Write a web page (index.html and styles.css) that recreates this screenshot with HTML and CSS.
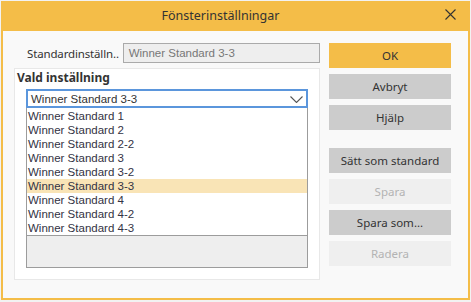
FILE: index.html
```html
<!DOCTYPE html>
<html lang="sv">
<head>
<meta charset="utf-8">
<title>Fönsterinställningar</title>
<link rel="stylesheet" href="styles.css">
</head>
<body>
<div class="window">
  <div class="titlebar">
    <div class="title">Fönsterinställningar</div>
    <button class="close" aria-label="Stäng">
      <svg width="11" height="11" viewBox="0 0 11 11"><path d="M0.5 0.5 L10.5 10.5 M10.5 0.5 L0.5 10.5" stroke="#333" stroke-width="1.1" fill="none"/></svg>
    </button>
  </div>
  <div class="content">
    <div class="left">
      <div class="field-row">
        <span class="field-label">Standardinställn..</span>
        <div class="textbox">Winner Standard 3-3</div>
      </div>
      <div class="group">
        <div class="group-title">Vald inställning</div>
        <div class="combo">
          <span>Winner Standard 3-3</span>
          <svg class="chev" width="13" height="7" viewBox="0 0 13 7"><path d="M0.5 0.5 L6.5 6.5 L12.5 0.5" stroke="#555" stroke-width="1.1" fill="none"/></svg>
        </div>
        <div class="listwrap">
          <ul class="list">
            <li>Winner Standard 1</li>
            <li>Winner Standard 2</li>
            <li>Winner Standard 2-2</li>
            <li>Winner Standard 3</li>
            <li>Winner Standard 3-2</li>
            <li class="selected">Winner Standard 3-3</li>
            <li>Winner Standard 4</li>
            <li>Winner Standard 4-2</li>
            <li>Winner Standard 4-3</li>
          </ul>
          <div class="list-empty"></div>
        </div>
      </div>
    </div>
    <div class="right">
      <div class="btn-group">
        <button class="btn primary">OK</button>
        <button class="btn">Avbryt</button>
        <button class="btn">Hjälp</button>
      </div>
      <div class="btn-group second">
        <button class="btn">Sätt som standard</button>
        <button class="btn disabled">Spara</button>
        <button class="btn">Spara som...</button>
        <button class="btn disabled">Radera</button>
      </div>
    </div>
  </div>
</div>
</body>
</html>
```
FILE: styles.css
```css
html, body {
  margin: 0;
  padding: 0;
}
body {
  background: #f2f2f2;
  width: 471px;
  height: 302px;
  overflow: hidden;
  font-family: "Noto Sans", "Open Sans", sans-serif;
  color: #333;
}
.window {
  margin: 1px 0 0 1px;
  width: 469px;
  height: 299px;
  box-sizing: border-box;
  border: 2px solid #f4bd48;
  border-top: 0;
  background: #f9f9f9;
  display: flex;
  flex-direction: column;
}
.titlebar {
  height: 30px;
  background: #f4bd48;
  position: relative;
  display: flex;
  align-items: center;
  justify-content: center;
  padding-right: 30px;
}
.title {
  font-size: 12.5px;
  color: #333;
  margin-top: -1px;
}
.close {
  position: absolute;
  right: 12px;
  top: 8px;
  width: 11px;
  height: 11px;
  padding: 0;
  border: 0;
  background: none;
  display: block;
}
.close svg { display: block; }
.content {
  flex: 1;
  display: flex;
  padding: 12px 0 0 11px;
}
.left {
  width: 306px;
  display: flex;
  flex-direction: column;
}
.field-row {
  display: flex;
  align-items: center;
  height: 20px;
}
.field-label {
  font-size: 11.5px;
  width: 96px;
  padding-left: 13px;
  letter-spacing: -0.15px;
  white-space: nowrap;
  overflow: hidden;
  color: #333;
}
.textbox {
  width: 198px;
  height: 20px;
  box-sizing: border-box;
  border: 1px solid #aaa;
  background: #eeeeee;
  color: #777;
  font-family: "Liberation Sans", Arial, sans-serif;
  font-size: 11.5px;
  line-height: 18px;
  padding-left: 5px;
}
.group {
  margin-top: 5px;
  height: 212px;
  box-sizing: border-box;
  border: 1px solid #e8e8e8;
  background: #fff;
  padding: 0 0 0 11px;
}
.group-title {
  font-weight: bold;
  font-size: 12px;
  margin-left: -9px;
  height: 20px;
  line-height: 17px;
  color: #333;
}
.combo {
  width: 282px;
  height: 19px;
  box-sizing: border-box;
  border: 2px solid #5b96dc;
  display: flex;
  align-items: center;
  justify-content: space-between;
  padding: 0 3px 0 3px;
  font-family: "Liberation Sans", Arial, sans-serif;
  font-size: 11.5px;
  color: #333;
}
.chev { display: block; margin-top: 1px; }
.listwrap {
  width: 282px;
  box-sizing: border-box;
  border: 1px solid #9c9c9c;
  border-top: 0;
}
.list {
  list-style: none;
  margin: 0;
  padding: 1px 0 0 0;
  border-bottom: 1px solid #9c9c9c;
  font-family: "Liberation Sans", Arial, sans-serif;
  font-size: 11.5px;
  color: #333344;
}
.list li {
  height: 14px;
  line-height: 14px;
  padding-left: 1px;
}
.list li.selected {
  background: #f9e4b6;
}
.list-empty {
  height: 31px;
  background: #eeeeee;
}
.right {
  margin-left: 9px;
  width: 122px;
  display: flex;
  flex-direction: column;
}
.btn-group {
  display: flex;
  flex-direction: column;
  gap: 6px;
}
.btn-group.second {
  margin-top: 18px;
}
.btn {
  height: 25px;
  border: 0;
  margin: 0;
  padding: 0;
  background: #cccccc;
  color: #333;
  font-family: "Noto Sans", "Open Sans", sans-serif;
  font-size: 11.5px;
}
.btn.primary {
  background: #f4bd48;
}
.btn.disabled {
  background: #efefef;
  color: #b3b3b3;
}
```
